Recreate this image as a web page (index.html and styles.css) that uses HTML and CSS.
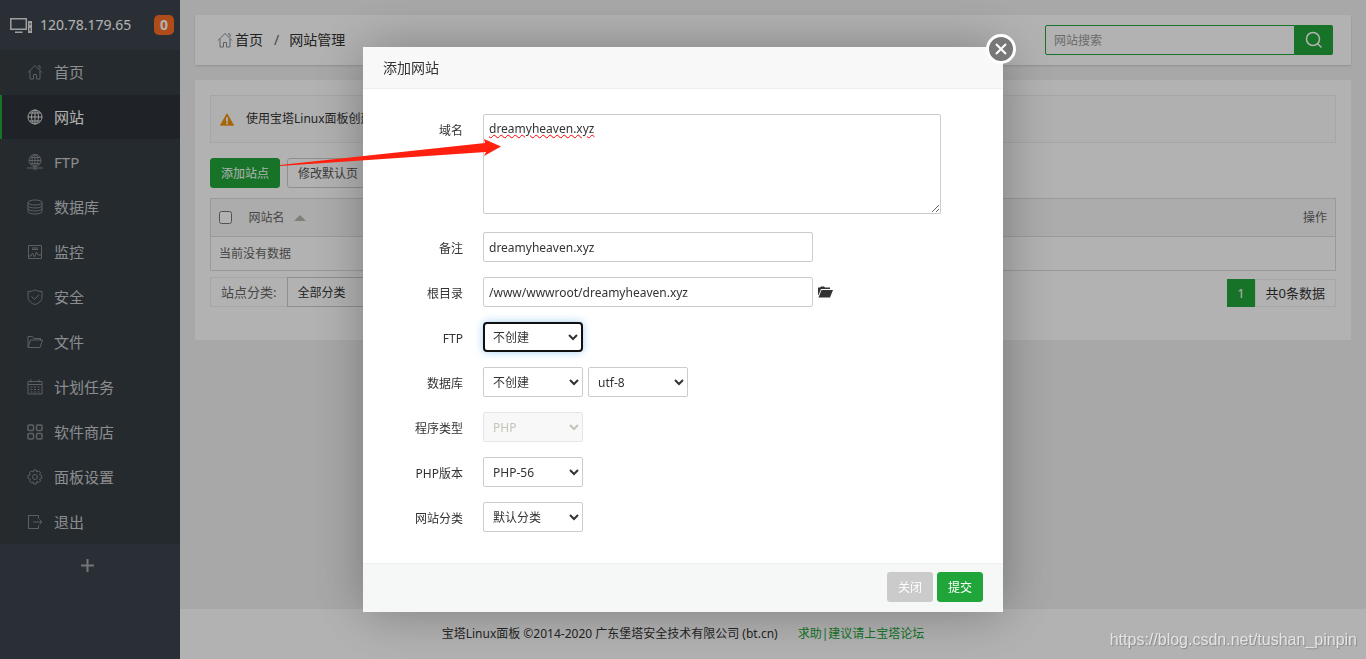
FILE: index.html
```html
<!DOCTYPE html>
<html lang="zh-CN">
<head>
  <meta charset="utf-8">
  <title>网站管理</title>
  <link rel="stylesheet" href="styles.css">
</head>
<body>
  <div class="page">
    <aside class="sidebar">
      <div class="server">
        <svg class="server-icon" viewBox="0 0 23 17" width="23" height="17" fill="none" stroke="#e4e4e4" stroke-width="1.500">
          <path d="M.8 1.800h15.500v10.500H.8zM5 15.300h7.500"/>
          <path d="M18 4h4v12h-4z" fill="#e4e4e4" stroke="none"/>
          <path d="M20 6v2M20 11v3" stroke="#3c444d" stroke-width="1"/>
        </svg>
        <span class="server-ip">120.78.179.65</span>
        <span class="badge">0</span>
      </div>
      <nav class="menu">
        <a href="#"><svg viewBox="0 0 16 16"><path d="M1 8.500 8 1.500l7 7M3 7v8h3.500v-4.500h3V15H13V7M11 2h2v3"/></svg>首页</a>
        <a href="#" class="active"><svg viewBox="0 0 16 16"><circle cx="8" cy="8" r="7"/><ellipse cx="8" cy="8" rx="3.500" ry="7"/><path d="M8 1v14M1 8h14M2.500 4h11M2.500 12h11"/></svg>网站</a>
        <a href="#"><svg viewBox="0 0 16 16"><circle cx="8" cy="6.500" r="6"/><ellipse cx="8" cy="6.500" rx="3" ry="6"/><path d="M8 .5v14M2 6.500h12M3 3.500h10M3 9.500h10M0 14h16M6 15h4"/></svg>FTP</a>
        <a href="#"><svg viewBox="0 0 16 16"><ellipse cx="8" cy="3.500" rx="7" ry="2.500"/><path d="M1 3.500v9c0 3.300 14 3.300 14 0v-9M1 6.500c0 3.300 14 3.300 14 0M1 9.500c0 3.300 14 3.300 14 0"/></svg>数据库</a>
        <a href="#"><svg viewBox="0 0 16 16"><path d="M1.500 1.500h13v13h-13zM5 4h6M5 5.500h6M2 12h2l1.500-3 2 4 2-5 1.500 3H14"/></svg>监控</a>
        <a href="#"><svg viewBox="0 0 16 16"><path d="M8 .8c2 1.200 4 1.700 7 1.700V8c0 4-3.500 6.500-7 7.500C4.500 14.500 1 12 1 8V2.500C4 2.500 6 2 8 .8zM4.500 7.500l3 3 4.500-5"/></svg>安全</a>
        <a href="#"><svg viewBox="0 0 16 16"><path d="M1 13V2.500h4.500L7 4.500h6.500v2M1 13.500 3.500 6H15.500l-2.500 7.500z"/></svg>文件</a>
        <a href="#"><svg viewBox="0 0 16 16"><path d="M1 2.500h14V15H1zM1 5.500h14M4 .5v3M12 .5v3M3.500 8h2M7 8h2M10.500 8h2M3.500 10.500h2M7 10.500h2M10.500 10.500h2M3.500 13h2M7 13h2M10.500 13h2"/></svg>计划任务</a>
        <a href="#"><svg viewBox="0 0 16 16" stroke-width="1.500"><rect x="1" y="1" width="5.500" height="5.500" rx="1"/><rect x="9.500" y="1" width="5.500" height="5.500" rx="1"/><rect x="1" y="9.500" width="5.500" height="5.500" rx="1"/><rect x="9.500" y="9.500" width="5.500" height="5.500" rx="1"/></svg>软件商店</a>
        <a href="#"><svg viewBox="0 0 16 16"><circle cx="8" cy="8" r="2.500"/><path d="M6.800 1h2.400l.6 2 2-1 1.700 1.800-1 1.900 2.200.7v2.900l-2.200.7 1 1.900-1.700 1.700-2-1L9.200 15H6.800l-.7-2-1.900 1-1.700-1.700 1-1.900L1 9.300V6.400l2.400-.7-1-1.900L4.200 2l1.900 1z"/></svg>面板设置</a>
        <a href="#"><svg viewBox="0 0 16 16"><path d="M11.500 4.500v-3h-10v13h10v-3M6 8h9M12.500 5.500 15 8l-2.500 2.500"/></svg>退出</a>
      </nav>
      <button type="button" class="menu-add" aria-label="添加菜单">
        <svg viewBox="0 0 13 13" width="13" height="13"><path d="M6.500 0v13M0 6.500h13" stroke="#a6a8ab" stroke-width="2"/></svg>
      </button>
    </aside>

    <main class="main">
      <header class="crumb-bar">
        <div class="crumbs">
          <svg viewBox="0 0 16 16"><path d="M1 8.500 8 1.500l7 7M3 7v8h3.500v-4.500h3V15H13V7M11 2h2v3"/></svg>
          <a href="#">首页</a>
          <span class="slash">/</span>
          <span>网站管理</span>
        </div>
        <form class="search">
          <input type="text" placeholder="网站搜索" aria-label="网站搜索">
          <button type="button" aria-label="搜索">
            <svg viewBox="0 0 18 18" width="18" height="18" fill="none" stroke="#fff" stroke-width="1.500"><circle cx="8" cy="8" r="6.500"/><path d="m12.500 12.500 4 4"/></svg>
          </button>
        </form>
      </header>

      <section class="panel">
        <div class="notice">
          <svg viewBox="0 0 16 14" width="14" height="13"><path d="M8 .5 15.500 13.500H.5z" fill="#f0900f" stroke="#f0900f" stroke-linejoin="round"/><path d="M8 4.500v5M8 10.500v2" stroke="#fff" stroke-width="2"/></svg>
          <span>使用宝塔Linux面板创建</span>
        </div>
        <div class="toolbar">
          <button type="button" class="btn btn-success">添加站点</button>
          <button type="button" class="btn btn-default">修改默认页</button>
        </div>
        <table class="sites">
          <thead>
            <tr>
              <th class="col-check"><input type="checkbox" aria-label="全选"></th>
              <th>网站名<span class="sort"></span></th>
              <th class="col-action">操作</th>
            </tr>
          </thead>
          <tbody>
            <tr><td colspan="3">当前没有数据</td></tr>
          </tbody>
        </table>
        <div class="table-foot">
          <div class="type-filter">
            <label for="siteType">站点分类:</label>
            <select id="siteType"><option>全部分类</option></select>
          </div>
          <div class="pager">
            <span class="current">1</span>
            <span class="count">共0条数据</span>
          </div>
        </div>
      </section>
    </main>

    <footer class="footer">
      <span>宝塔Linux面板 ©2014-2020 广东堡塔安全技术有限公司 (bt.cn)</span>
      <a href="#">求助|建议请上宝塔论坛</a>
    </footer>
  </div>

  <div class="shade">
    <form class="modal">
      <h2 class="modal-title">添加网站</h2>
      <button type="button" class="modal-close" aria-label="关闭窗口">
        <svg viewBox="0 0 12 12" width="12" height="12"><path d="m1 1 10 10M11 1 1 11" stroke="#fff" stroke-width="2"/></svg>
      </button>
      <div class="modal-body">
        <div class="line line-area">
          <label for="domain">域名</label>
          <textarea id="domain">dreamyheaven.xyz</textarea>
        </div>
        <div class="line">
          <label for="remark">备注</label>
          <input type="text" id="remark" value="dreamyheaven.xyz">
        </div>
        <div class="line">
          <label for="path">根目录</label>
          <input type="text" id="path" value="/www/wwwroot/dreamyheaven.xyz">
          <button type="button" class="folder" aria-label="选择目录">
            <svg viewBox="0 0 15 12" width="15" height="12" fill="#333"><path d="M0 9V1.500h2L3 .5h3l1 1h5V3H3L.5 9z"/><path d="M3.500 4H15l-3 7.500H.5z"/></svg>
          </button>
        </div>
        <div class="line">
          <label for="ftp">FTP</label>
          <select id="ftp" class="focused"><option>不创建</option></select>
        </div>
        <div class="line">
          <label for="database">数据库</label>
          <select id="database"><option>不创建</option></select>
          <select aria-label="编码"><option>utf-8</option></select>
        </div>
        <div class="line">
          <label for="program">程序类型</label>
          <select id="program" disabled><option>PHP</option></select>
        </div>
        <div class="line">
          <label for="version">PHP版本</label>
          <select id="version"><option>PHP-56</option></select>
        </div>
        <div class="line">
          <label for="category">网站分类</label>
          <select id="category"><option>默认分类</option></select>
        </div>
      </div>
      <div class="modal-foot">
        <button type="button" class="btn btn-close">关闭</button>
        <button type="button" class="btn btn-success">提交</button>
      </div>
    </form>
  </div>

  <svg class="arrow" viewBox="0 0 222 30" width="222" height="30"><path d="M0 27 205 5 204 1 221 8.500 204 18 206 14 0 28z" fill="#ff2010"/></svg>
  <div class="watermark">https://blog.csdn.net/tushan_pinpin</div>
</body>
</html>
```

FILE: styles.css
```css
* {
  box-sizing: border-box;
}

body {
  margin: 0;
  font-family: "Noto Sans", "Noto Sans CJK SC", sans-serif;
  font-size: 12px;
  line-height: 20px;
  color: #333;
  background: #f1f1f1;
}

a {
  color: inherit;
  text-decoration: none;
}

button, input, select, textarea {
  font: inherit;
  color: inherit;
}

button {
  cursor: pointer;
}

.page {
  display: grid;
  grid-template-columns: 180px 1fr;
  grid-template-rows: 1fr 50px;
  min-height: 100vh;
}

/* sidebar */
.sidebar {
  grid-column: 1;
  grid-row: 1 / 3;
  z-index: 1;
  background: #3c444d;
}

.server {
  display: flex;
  align-items: center;
  height: 50px;
  padding: 0 6px 0 10px;
  color: #fff;
  font-size: 14px;
}

.server-ip {
  margin-left: 7px;
}

.badge {
  width: 20px;
  margin-left: auto;
  border-radius: 5px;
  background: #fc6d26;
  font-weight: bold;
  text-align: center;
}

.menu {
  background: #353d44;
}

.menu a {
  display: flex;
  align-items: center;
  gap: 11px;
  height: 44px;
  margin-bottom: 1px;
  padding-left: 25px;
  border-left: 2px solid #3a3d3e;
  color: #c8cacc;
  font-size: 15px;
}

.menu a:last-child {
  margin-bottom: 0;
}

.menu svg,
.crumbs svg {
  width: 16px;
  height: 16px;
  fill: none;
  stroke: #858a8e;
}

.menu .active {
  border-color: #20a53a;
  background: #2d3338;
  color: #fff;
}

.menu .active svg {
  stroke: #e0e0e0;
}

.menu-add {
  display: block;
  width: 100%;
  height: 42px;
  padding: 0 5px 0 0;
  border: 0;
  background: none;
}

.menu-add svg {
  vertical-align: middle;
}

/* content */
.main {
  padding: 15px;
}

.crumb-bar {
  display: flex;
  align-items: center;
  justify-content: space-between;
  height: 50px;
  margin-bottom: 15px;
  padding: 0 18px 0 22px;
  background: #fff;
  box-shadow: 0 1px 2px rgba(0, 0, 0, .15);
}

.crumbs {
  display: flex;
  align-items: center;
  font-size: 14px;
}

.crumbs a {
  margin-left: 2px;
}

.slash {
  margin: 0 10px 0 11px;
  color: #666;
}

.search {
  display: flex;
}

.search input {
  width: 250px;
  height: 30px;
  padding: 0 8px;
  border: 1px solid #20a53a;
  border-radius: 2px 0 0 2px;
  background: #fff;
}

.search input::placeholder {
  color: #999;
}

.search button {
  display: flex;
  align-items: center;
  justify-content: center;
  width: 38px;
  border: 0;
  border-radius: 0 2px 2px 0;
  background: #20a53a;
}

.panel {
  min-height: 260px;
  padding: 15px;
  background: #fff;
}

.notice {
  display: flex;
  align-items: center;
  gap: 12px;
  height: 48px;
  margin-bottom: 15px;
  padding: 0 9px;
  border: 1px solid #eee;
  background: #fcfcfc;
}

.toolbar {
  display: flex;
  gap: 7px;
  margin-bottom: 10px;
}

.btn {
  height: 30px;
  padding: 2px 10px 0;
  border: 1px solid transparent;
  border-radius: 3px;
}

.btn-success {
  border-color: #20a53a;
  background: #20a53a;
  color: #fff;
}

.btn-default {
  border-color: #ccc;
  background: #fff;
  color: #555;
}

.btn-close {
  background: #cbcbcb;
  color: #fff;
}

.sites {
  width: 100%;
  border: 1px solid #ddd;
  border-collapse: collapse;
  color: #666;
}

.sites th {
  height: 38px;
  padding: 0 8px;
  background: #f6f6f6;
  font-weight: normal;
  text-align: left;
}

.sites .col-check {
  width: 30px;
}

.sites .col-action {
  text-align: right;
}

.sites th input {
  display: block;
  margin: 0;
}

.sort {
  display: inline-block;
  margin-left: 9px;
  border: 6px solid transparent;
  border-top: 0;
  border-bottom-color: #b8b8b0;
  vertical-align: middle;
}

.sites td {
  height: 34px;
  padding: 0 8px;
  border-top: 1px solid #ddd;
}

.table-foot {
  display: flex;
  align-items: flex-end;
  justify-content: space-between;
  margin-top: 6px;
  font-size: 13px;
}

.type-filter {
  display: flex;
  border: 1px solid #eee;
}

.type-filter label {
  padding: 4px 12px 4px 10px;
  color: #666;
}

.type-filter select {
  width: 100px;
  margin: -1px;
  padding: 0 5px;
  border: 1px solid #ccc;
  background: #fff;
  font-size: 12px;
}

.pager {
  display: flex;
  line-height: 26px;
}

.pager span {
  padding: 0 10px;
  border: 1px solid #eee;
}

.pager .current {
  padding: 0 9px;
  border-color: #20a53a;
  background: #20a53a;
  color: #fff;
}

.footer {
  grid-column: 1 / 3;
  grid-row: 2;
  display: flex;
  align-items: center;
  justify-content: center;
  gap: 20px;
  background: #fff;
}

.footer a {
  color: #20a53a;
}

/* dialog */
.shade {
  position: fixed;
  inset: 0;
  z-index: 10;
  display: flex;
  align-items: center;
  justify-content: center;
  background: rgba(0, 0, 0, .3);
}

.modal {
  position: relative;
  width: 640px;
  max-width: 100%;
  background: #fff;
  box-shadow: 1px 1px 50px rgba(0, 0, 0, .3);
}

.modal-title {
  margin: 0;
  padding: 0 20px;
  border-bottom: 1px solid #eee;
  background: #f8f8f8;
  font-size: 14px;
  font-weight: normal;
  line-height: 41px;
}

.modal-close {
  position: absolute;
  top: -13px;
  right: -13px;
  display: flex;
  align-items: center;
  justify-content: center;
  width: 30px;
  height: 30px;
  padding: 0;
  border: 3px solid #fff;
  border-radius: 50%;
  background: #787878;
}

.modal-body {
  display: flex;
  flex-direction: column;
  gap: 15px;
  padding: 25px 0 31px;
}

.line {
  display: flex;
  gap: 5px;
}

.line-area {
  margin-bottom: 3px;
}

.line label {
  width: 100px;
  margin-right: 15px;
  padding-top: 7px;
  text-align: right;
}

.line input,
.line select,
.line textarea {
  height: 30px;
  padding: 0 5px;
  border: 1px solid #ccc;
  border-radius: 2px;
  background: #fff;
}

.line input {
  width: 330px;
}

.line select {
  width: 100px;
}

.line textarea {
  width: 458px;
  height: 100px;
  padding-top: 4px;
  text-decoration: underline wavy #f00 1px;
}

.line select:disabled {
  border-color: #e6e6e6;
  background: #f8f8f8;
  color: #c4c4b8;
  opacity: 1;
}

.line .focused {
  border-radius: 4px;
  padding: 0 4px;
  border: 2px solid #101010;
  box-shadow: 0 0 8px rgba(102, 175, 233, .6);
}

.folder {
  padding: 0;
  border: 0;
  background: none;
}

.folder svg {
  display: block;
}

.modal-foot {
  display: flex;
  justify-content: flex-end;
  gap: 4px;
  padding: 8px 20px 10px;
  border-top: 1px solid #edf1f0;
  background: #f6f8f7;
}

/* pointer from the add button to the domain box */
.arrow {
  position: absolute;
  top: 138px;
  left: 280px;
  z-index: 20;
}

.watermark {
  position: fixed;
  right: 9px;
  bottom: 9px;
  z-index: 20;
  color: #e4e4e4;
  font-family: "Liberation Sans", sans-serif;
  font-size: 16px;
  text-shadow: 1px 1px 1px #888;
}
```
